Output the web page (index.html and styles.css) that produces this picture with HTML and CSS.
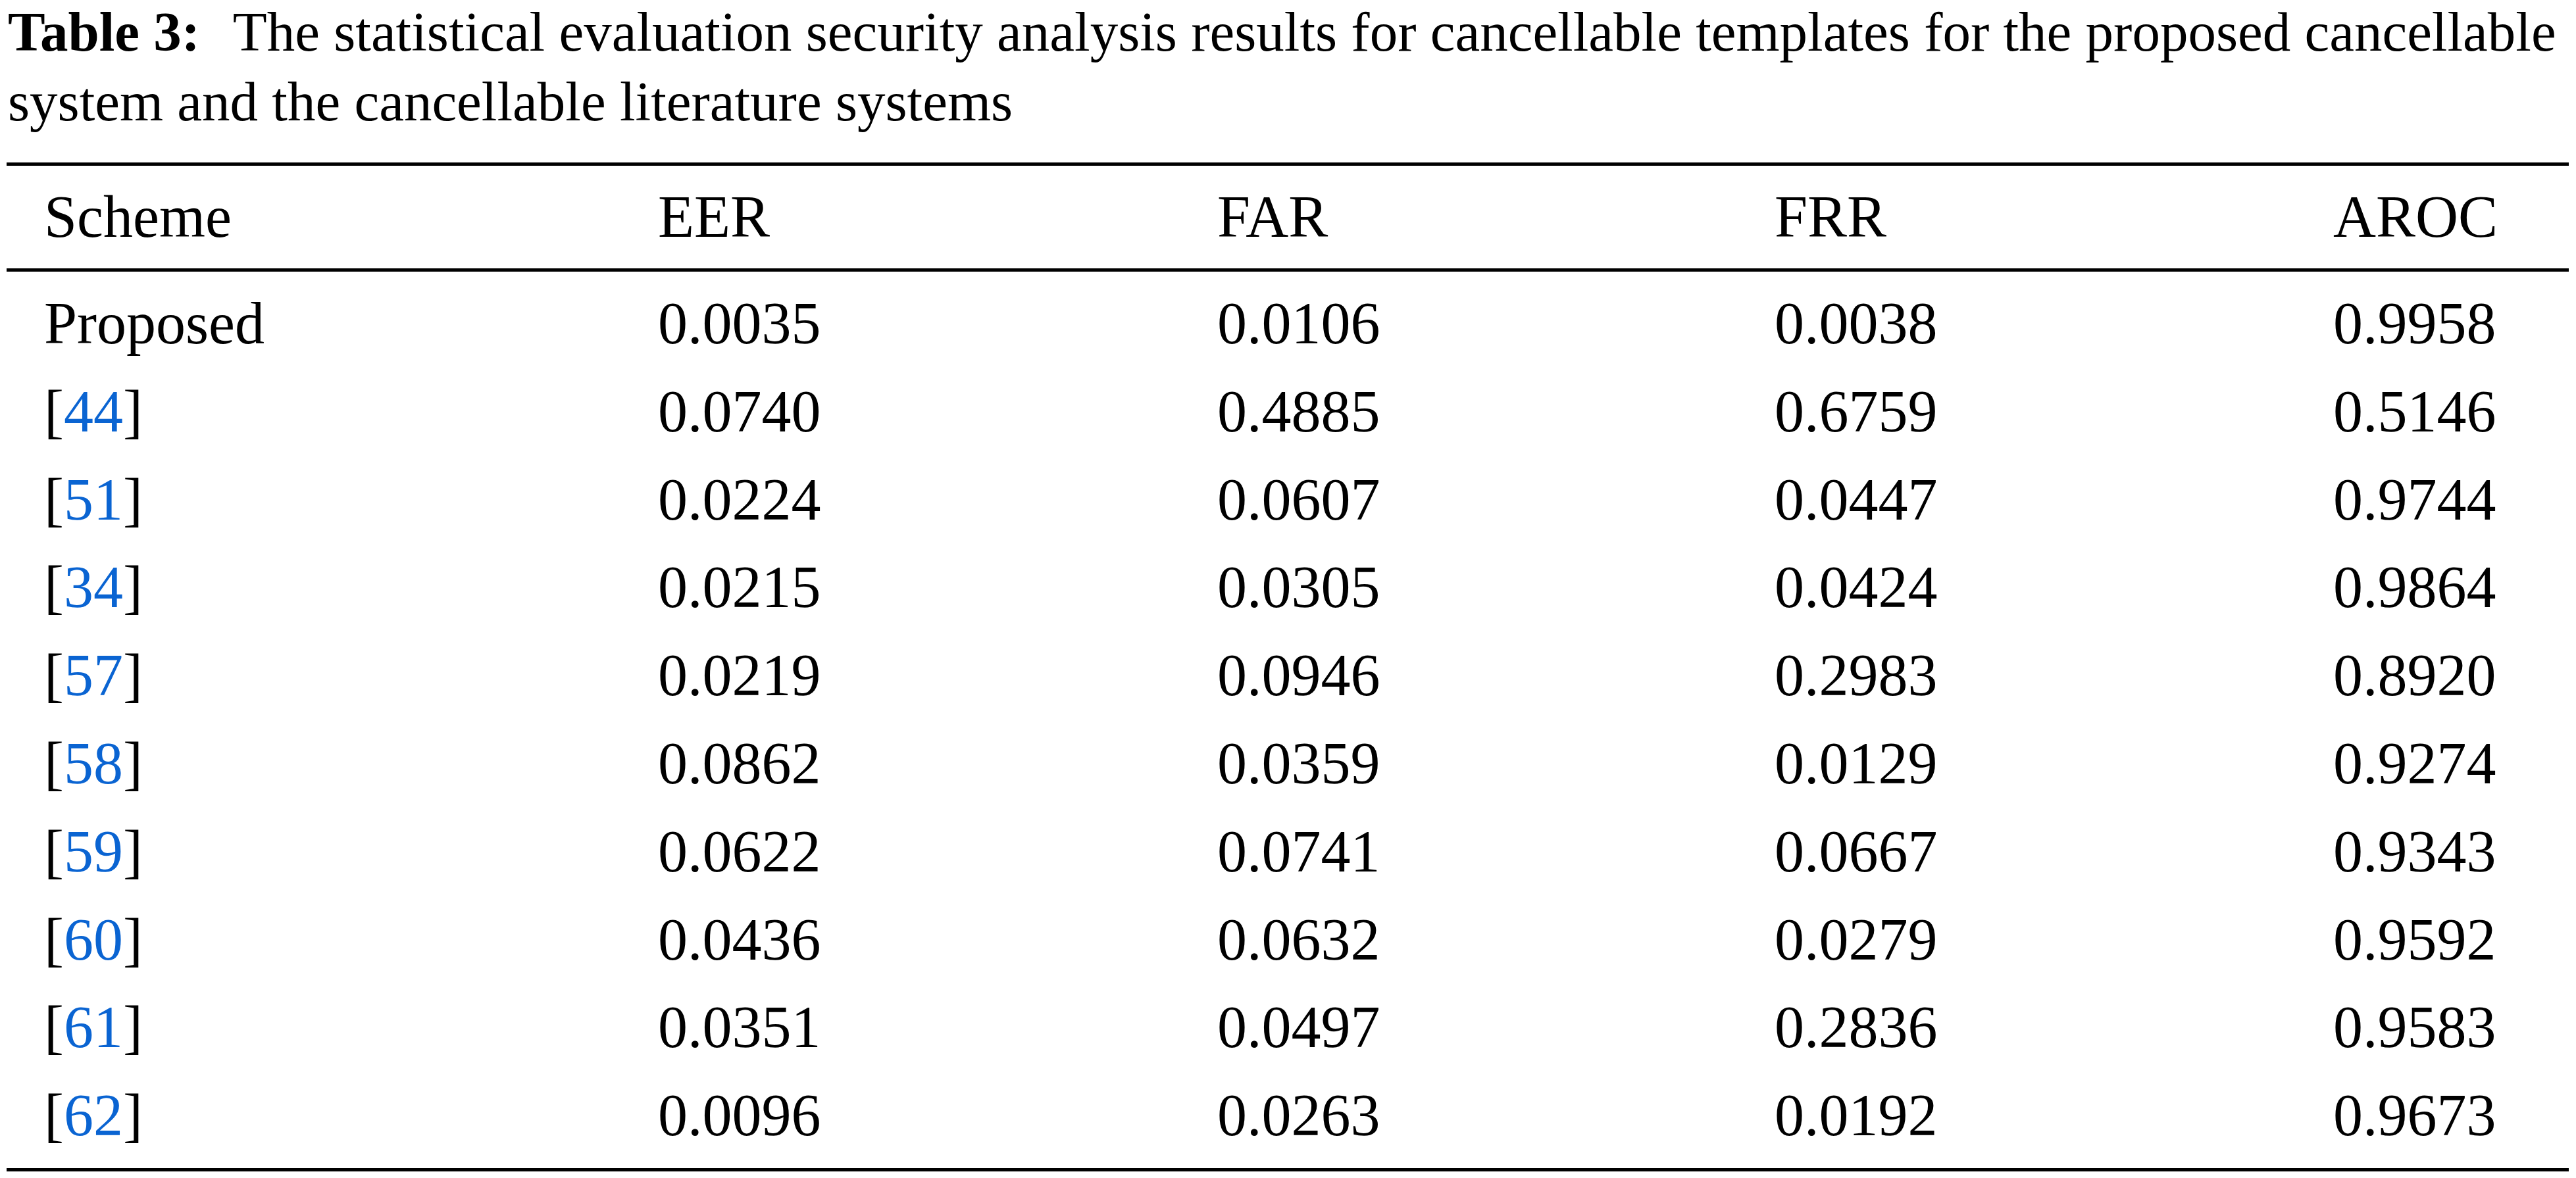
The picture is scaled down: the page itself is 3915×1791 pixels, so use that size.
FILE: index.html
```html
<!DOCTYPE html>
<html lang="en">
<head>
<meta charset="utf-8">
<title>Table 3</title>
<link rel="stylesheet" href="styles.css">
</head>
<body>
<div class="page">
  <p class="caption"><span class="label">Table 3:</span> The statistical evaluation security analysis results for cancellable templates for the proposed cancellable system and the cancellable literature systems</p>
  <div class="table">
    <div class="row head">
      <div class="cell">Scheme</div>
      <div class="cell">EER</div>
      <div class="cell">FAR</div>
      <div class="cell">FRR</div>
      <div class="cell">AROC</div>
    </div>
    <div class="body">
      <div class="row"><div class="cell">Proposed</div><div class="cell">0.0035</div><div class="cell">0.0106</div><div class="cell">0.0038</div><div class="cell">0.9958</div></div>
      <div class="row"><div class="cell">[<span class="ref">44</span>]</div><div class="cell">0.0740</div><div class="cell">0.4885</div><div class="cell">0.6759</div><div class="cell">0.5146</div></div>
      <div class="row"><div class="cell">[<span class="ref">51</span>]</div><div class="cell">0.0224</div><div class="cell">0.0607</div><div class="cell">0.0447</div><div class="cell">0.9744</div></div>
      <div class="row"><div class="cell">[<span class="ref">34</span>]</div><div class="cell">0.0215</div><div class="cell">0.0305</div><div class="cell">0.0424</div><div class="cell">0.9864</div></div>
      <div class="row"><div class="cell">[<span class="ref">57</span>]</div><div class="cell">0.0219</div><div class="cell">0.0946</div><div class="cell">0.2983</div><div class="cell">0.8920</div></div>
      <div class="row"><div class="cell">[<span class="ref">58</span>]</div><div class="cell">0.0862</div><div class="cell">0.0359</div><div class="cell">0.0129</div><div class="cell">0.9274</div></div>
      <div class="row"><div class="cell">[<span class="ref">59</span>]</div><div class="cell">0.0622</div><div class="cell">0.0741</div><div class="cell">0.0667</div><div class="cell">0.9343</div></div>
      <div class="row"><div class="cell">[<span class="ref">60</span>]</div><div class="cell">0.0436</div><div class="cell">0.0632</div><div class="cell">0.0279</div><div class="cell">0.9592</div></div>
      <div class="row"><div class="cell">[<span class="ref">61</span>]</div><div class="cell">0.0351</div><div class="cell">0.0497</div><div class="cell">0.2836</div><div class="cell">0.9583</div></div>
      <div class="row"><div class="cell">[<span class="ref">62</span>]</div><div class="cell">0.0096</div><div class="cell">0.0263</div><div class="cell">0.0192</div><div class="cell">0.9673</div></div>
    </div>
  </div>
</div>
</body>
</html>
```
FILE: styles.css
```css
html, body {
  margin: 0;
  padding: 0;
  background: #ffffff;
  color: #000000;
  font-family: "Liberation Serif", "Times New Roman", serif;
}

.page {
  width: 3915px;
  box-sizing: border-box;
  padding: 0 11px 0 10px;
  overflow: hidden;
}

.caption {
  margin: -5px -11px 0 0;
  padding-left: 2px;
  font-size: 85px;
  line-height: 106px;
}

.label {
  font-weight: bold;
  margin-right: 30px;
}

.table {
  margin-top: 40px;
  border-top: 5px solid #000;
  border-bottom: 5px solid #000;
  font-size: 90px;
}

.row {
  display: grid;
  grid-template-columns: 933px 850px 847px 849px 1fr;
}

.head {
  height: 156px;
  line-height: 156px;
  border-bottom: 5px solid #000;
}

.body {
  padding: 12px 0 13px;
}

.body .row {
  height: 133.8px;
  line-height: 133.8px;
}

.cell {
  padding-left: 57px;
  white-space: nowrap;
}

.ref {
  color: #0a64d2;
}
```
